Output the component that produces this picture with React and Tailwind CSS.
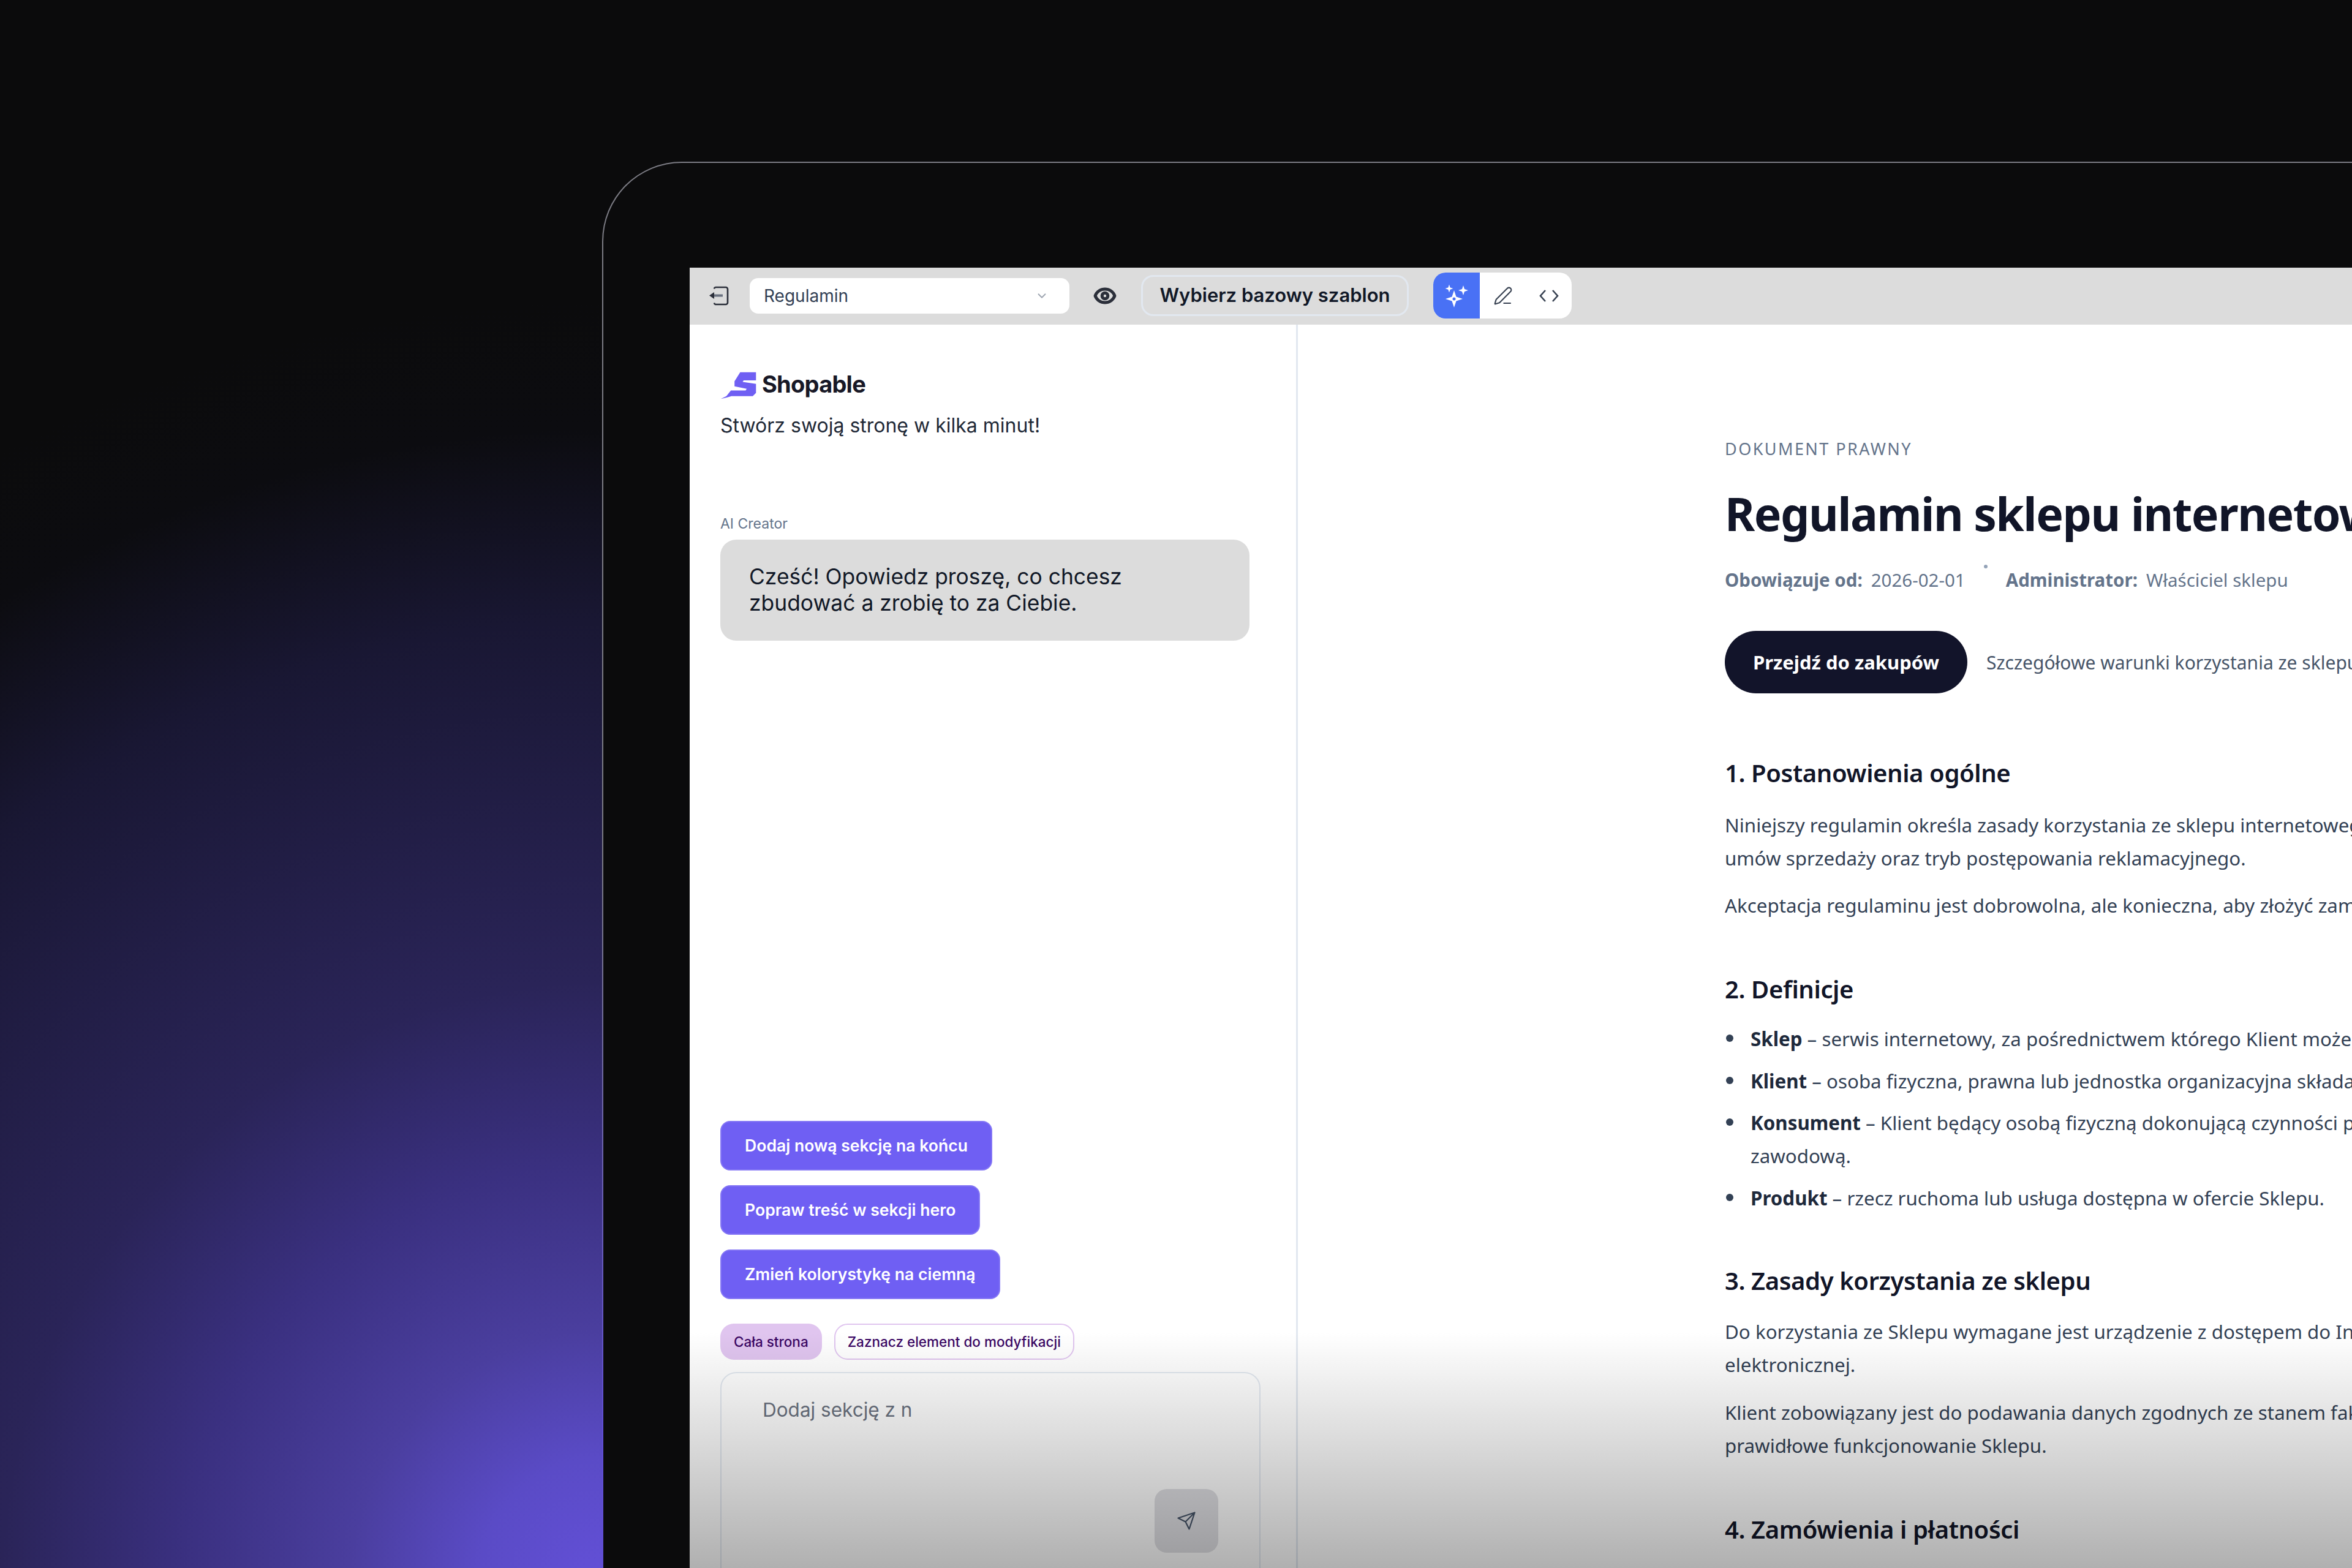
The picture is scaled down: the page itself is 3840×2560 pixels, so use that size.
import React from 'react';
import { ChevronDown, Eye, PenLine } from 'lucide-react';

const SIDE_FONT = "font-['Inter','Noto_Sans',sans-serif]";
const DOC_FONT = "font-['Noto_Sans','Open_Sans',sans-serif]";

const prompts = ['Dodaj nową sekcję na końcu', 'Popraw treść w sekcji hero', 'Zmień kolorystykę na ciemną'];

const Sparkle = ({ cx, cy, r }) => (
    <path
        d={`M${cx} ${cy - r}L${cx + r * 0.25} ${cy - r * 0.25}L${cx + r} ${cy}L${cx + r * 0.25} ${cy + r * 0.25}L${cx} ${cy + r}L${cx - r * 0.25} ${cy + r * 0.25}L${cx - r} ${cy}L${cx - r * 0.25} ${cy - r * 0.25}Z`}
        fill="white"
    />
);

const Toolbar = () => (
    <div className={`flex h-[93px] items-center bg-[#dcdcdc] pb-[2px] pl-[30px] ${SIDE_FONT}`}>
        <svg width="36" height="34" viewBox="0 0 36 34" fill="none" className="shrink-0 text-[#2b2f3a]">
            <path d="M12 3h17a3 3 0 0 1 3 3v22a3 3 0 0 1-3 3H12a3 3 0 0 1-2-2.5M10 5.5A3 3 0 0 1 12 3" stroke="currentColor" strokeWidth="2.6" />
            <path d="M24 16.5H9" stroke="#6b7280" strokeWidth="4" />
            <path d="M10 11 2 16.5 10 22Z" fill="currentColor" />
        </svg>
        <div className="ml-[32px] flex h-[58px] w-[522px] items-center justify-between rounded-[14px] bg-white pl-[23px] pr-[34px] text-[28px] text-[#334155]">
            <span>Regulamin</span>
            <ChevronDown size={22} strokeWidth={2} className="text-[#9ca3af]" />
        </div>
        <Eye size={38} strokeWidth={3.2} className="ml-[39px] text-[#2b2f3a]" />
        <div className="ml-[40px] flex h-[67px] w-[437px] items-center justify-center rounded-[20px] border-[3px] border-[#e2e8f0] text-[31px] font-semibold text-[#111827]">
            Wybierz bazowy szablon
        </div>
        <div className="ml-[40px] flex h-[75px] w-[226px] overflow-hidden rounded-[20px] bg-white">
            <div className="flex w-[76px] items-center justify-center bg-[#4971f5]">
                <svg width="44" height="44" viewBox="0 0 44 44">
                    <Sparkle cx={18} cy={27} r={14} />
                    <Sparkle cx={33} cy={13} r={8} />
                    <Sparkle cx={10} cy={10} r={6.5} />
                    <circle cx="18" cy="27" r="2.5" fill="#4971f5" />
                </svg>
            </div>
            <div className="flex w-[75px] items-center justify-center">
                <PenLine size={32} strokeWidth={1.6} className="text-[#374151]" />
            </div>
            <div className="flex w-[75px] items-center justify-center">
                <svg width="32" height="24" viewBox="0 0 32 24" fill="none" stroke="#374151" strokeWidth="2.6">
                    <path d="M10 3 2 12l8 9M22 3l8 9-8 9" />
                </svg>
            </div>
        </div>
    </div>
);

const Sidebar = () => (
    <div className={`w-[993px] shrink-0 border-r-[3px] border-[#e2e8f0] pl-[50px] pt-[77px] ${SIDE_FONT}`}>
        <div className="flex h-[45px] items-center gap-[9px]">
            <svg width="59" height="45" viewBox="80 78 178 136" className="shrink-0">
                <path d="M178 80H256V120H195L190 128L256 138V182L240 198H135L112 205L82 212L110 198L132 170H205L210 162L150 150V125Z" fill="#6f5ff3" />
            </svg>
            <span className="pb-[6px] text-[38px] font-bold leading-none tracking-[-0.02em] text-[#181826]">Shopable</span>
        </div>
        <p className="mt-[22px] text-[32px] leading-[42px] text-[#1f2937]">Stwórz swoją stronę w kilka minut!</p>
        <p className="mt-[124px] text-[23px] leading-[30px] text-[#64748b]">AI Creator</p>
        <div className="mt-[11px] h-[165px] w-[864px] rounded-[26px] bg-[#dcdcdc] pl-[47px] pt-[39px] text-[35.4px] leading-[43px] text-[#111827]">
            Cześć! Opowiedz proszę, co chcesz<br />zbudować a zrobię to za Ciebie.
        </div>
        <div className="mt-[784px] flex flex-col items-start gap-[24px]">
            {prompts.map(text => (
                <div key={text} className="flex h-[81px] items-center rounded-[16px] border-2 border-[#8577f5] bg-[#6f5ff3] px-[38px] text-[26.6px] font-semibold text-white">
                    {text}
                </div>
            ))}
        </div>
        <div className="mt-[40px] flex gap-[20px] text-[22.5px] font-medium text-[#3b0764]">
            <div className="flex h-[59px] items-center rounded-[22px] bg-[#e0c5ef] px-[22px]">Cała strona</div>
            <div className="flex h-[59px] items-center rounded-[22px] border-2 border-[#e0c5ef] bg-white px-[20px]">Zaznacz element do modyfikacji</div>
        </div>
        <div className="mt-[20px] flex h-[360px] w-[882px] flex-col rounded-[26px] border-2 border-[#e2e8f0] pl-[67px] pt-[38px]">
            <span className="text-[31.5px] leading-[44px] text-[#6b7280]">Dodaj sekcję z n</span>
            <div className="ml-[640px] mt-[107px] flex h-[104px] w-[104px] items-center justify-center rounded-[20px] bg-[#e0e0e4]">
                <svg width="36" height="36" viewBox="0 0 24 24" fill="none" stroke="#475569" strokeWidth="1.5" strokeLinejoin="round">
                    <path d="M21 3 15 21 11 13 3 9ZM21 3 11 13" />
                </svg>
            </div>
        </div>
    </div>
);

const SectionTitle = ({ className, children }) => (
    <h2 className={`text-[40px] font-semibold leading-[60px] tracking-[-0.01em] text-[#111528] ${className}`}>{children}</h2>
);

const Para = ({ className = '', children }) => (
    <p className={`text-[31.3px] leading-[54px] text-[#334155] ${className}`}>{children}</p>
);

const Term = ({ name, children }) => (
    <li className="flex items-start gap-[28px]">
        <span className="mt-[20px] ml-[2px] h-[12px] w-[12px] shrink-0 rounded-full bg-[#334155]" />
        <span>
            <strong className="font-bold text-[#1e293b]">{name}</strong> – {children}
        </span>
    </li>
);

const Document = () => (
    <div className={`min-w-0 flex-1 whitespace-nowrap pl-[697px] pt-[185px] ${DOC_FONT}`}>
        <p className="text-[27px] leading-[36px] tracking-[0.09em] text-[#64748b]">DOKUMENT PRAWNY</p>
        <h1 className="mt-[37px] text-[75px] font-bold leading-[100px] tracking-[-0.02em] text-[#111528]">Regulamin sklepu internetowego</h1>
        <div className="mt-[39px] flex items-center text-[29.5px] leading-[40px] text-[#64748b]">
            <span className="font-bold">Obowiązuje od:</span>
            <span className="ml-[14px]">2026-02-01</span>
            <span className="relative top-[-22px] ml-[30px] h-[6px] w-[6px] rounded-full bg-[#94a3b8]" />
            <span className="ml-[30px] font-bold">Administrator:</span>
            <span className="ml-[14px]">Właściciel sklepu</span>
        </div>
        <div className="mt-[63px] flex items-center">
            <div className="flex h-[102px] w-[396px] shrink-0 items-center justify-center rounded-full bg-[#12142a] text-[31px] font-bold text-white">
                Przejdź do zakupów
            </div>
            <span className="ml-[31px] text-[30px] text-[#475569]">Szczegółowe warunki korzystania ze sklepu i składania zamówień</span>
        </div>
        <SectionTitle className="mt-[100px]">1. Postanowienia ogólne</SectionTitle>
        <Para className="mt-[28px]">Niniejszy regulamin określa zasady korzystania ze sklepu internetowego, zawierania<br />umów sprzedaży oraz tryb postępowania reklamacyjnego.</Para>
        <Para className="mt-[23px]">Akceptacja regulaminu jest dobrowolna, ale konieczna, aby złożyć zamówienie w Sklepie.</Para>
        <SectionTitle className="mt-[80px]">2. Definicje</SectionTitle>
        <ul className="mt-[24px] flex flex-col gap-[14.5px] text-[31.3px] leading-[54px] text-[#334155]">
            <Term name="Sklep">serwis internetowy, za pośrednictwem którego Klient może dokonywać zakupów.</Term>
            <Term name="Klient">osoba fizyczna, prawna lub jednostka organizacyjna składająca zamówienie.</Term>
            <Term name="Konsument">Klient będący osobą fizyczną dokonującą czynności prawnej niezwiązanej z działalnością<br />zawodową.</Term>
            <Term name="Produkt">rzecz ruchoma lub usługa dostępna w ofercie Sklepu.</Term>
        </ul>
        <SectionTitle className="mt-[78px]">3. Zasady korzystania ze sklepu</SectionTitle>
        <Para className="mt-[26px]">Do korzystania ze Sklepu wymagane jest urządzenie z dostępem do Internetu oraz poczty<br />elektronicznej.</Para>
        <Para className="mt-[24px]">Klient zobowiązany jest do podawania danych zgodnych ze stanem faktycznym i dbania o<br />prawidłowe funkcjonowanie Sklepu.</Para>
        <SectionTitle className="mt-[80px]">4. Zamówienia i płatności</SectionTitle>
    </div>
);

const App = () => (
    <div className="relative h-[2560px] w-[3840px] overflow-hidden bg-[radial-gradient(circle_2100px_at_990px_2590px,#6350d8_0%,#5a4bc6_10%,#4a3e9e_20%,#3a3080_33%,#2a2458_47%,#191733_75%,#0c0c10_90%,#0b0b0c_100%)]">
        <div className="ml-[983px] mt-[264px] h-[2296px] rounded-tl-[130px] border-l-2 border-t-2 border-[#7c7c84] bg-[#0b0b0c] pl-[141px] pt-[171px]">
            <div className="relative h-[2123px] overflow-hidden bg-white">
                <Toolbar />
                <div className="flex h-[2030px]">
                    <Sidebar />
                    <Document />
                </div>
                <div className="pointer-events-none absolute inset-x-0 bottom-0 h-[385px] bg-gradient-to-b from-black/0 to-black/[0.31]" />
            </div>
        </div>
        <div className="pointer-events-none absolute left-[983px] top-[1400px] h-[1160px] w-[2px] bg-gradient-to-b from-[#5f4ed4]/0 to-[#5f4ed4] to-80%" />
    </div>
);

export default App;
